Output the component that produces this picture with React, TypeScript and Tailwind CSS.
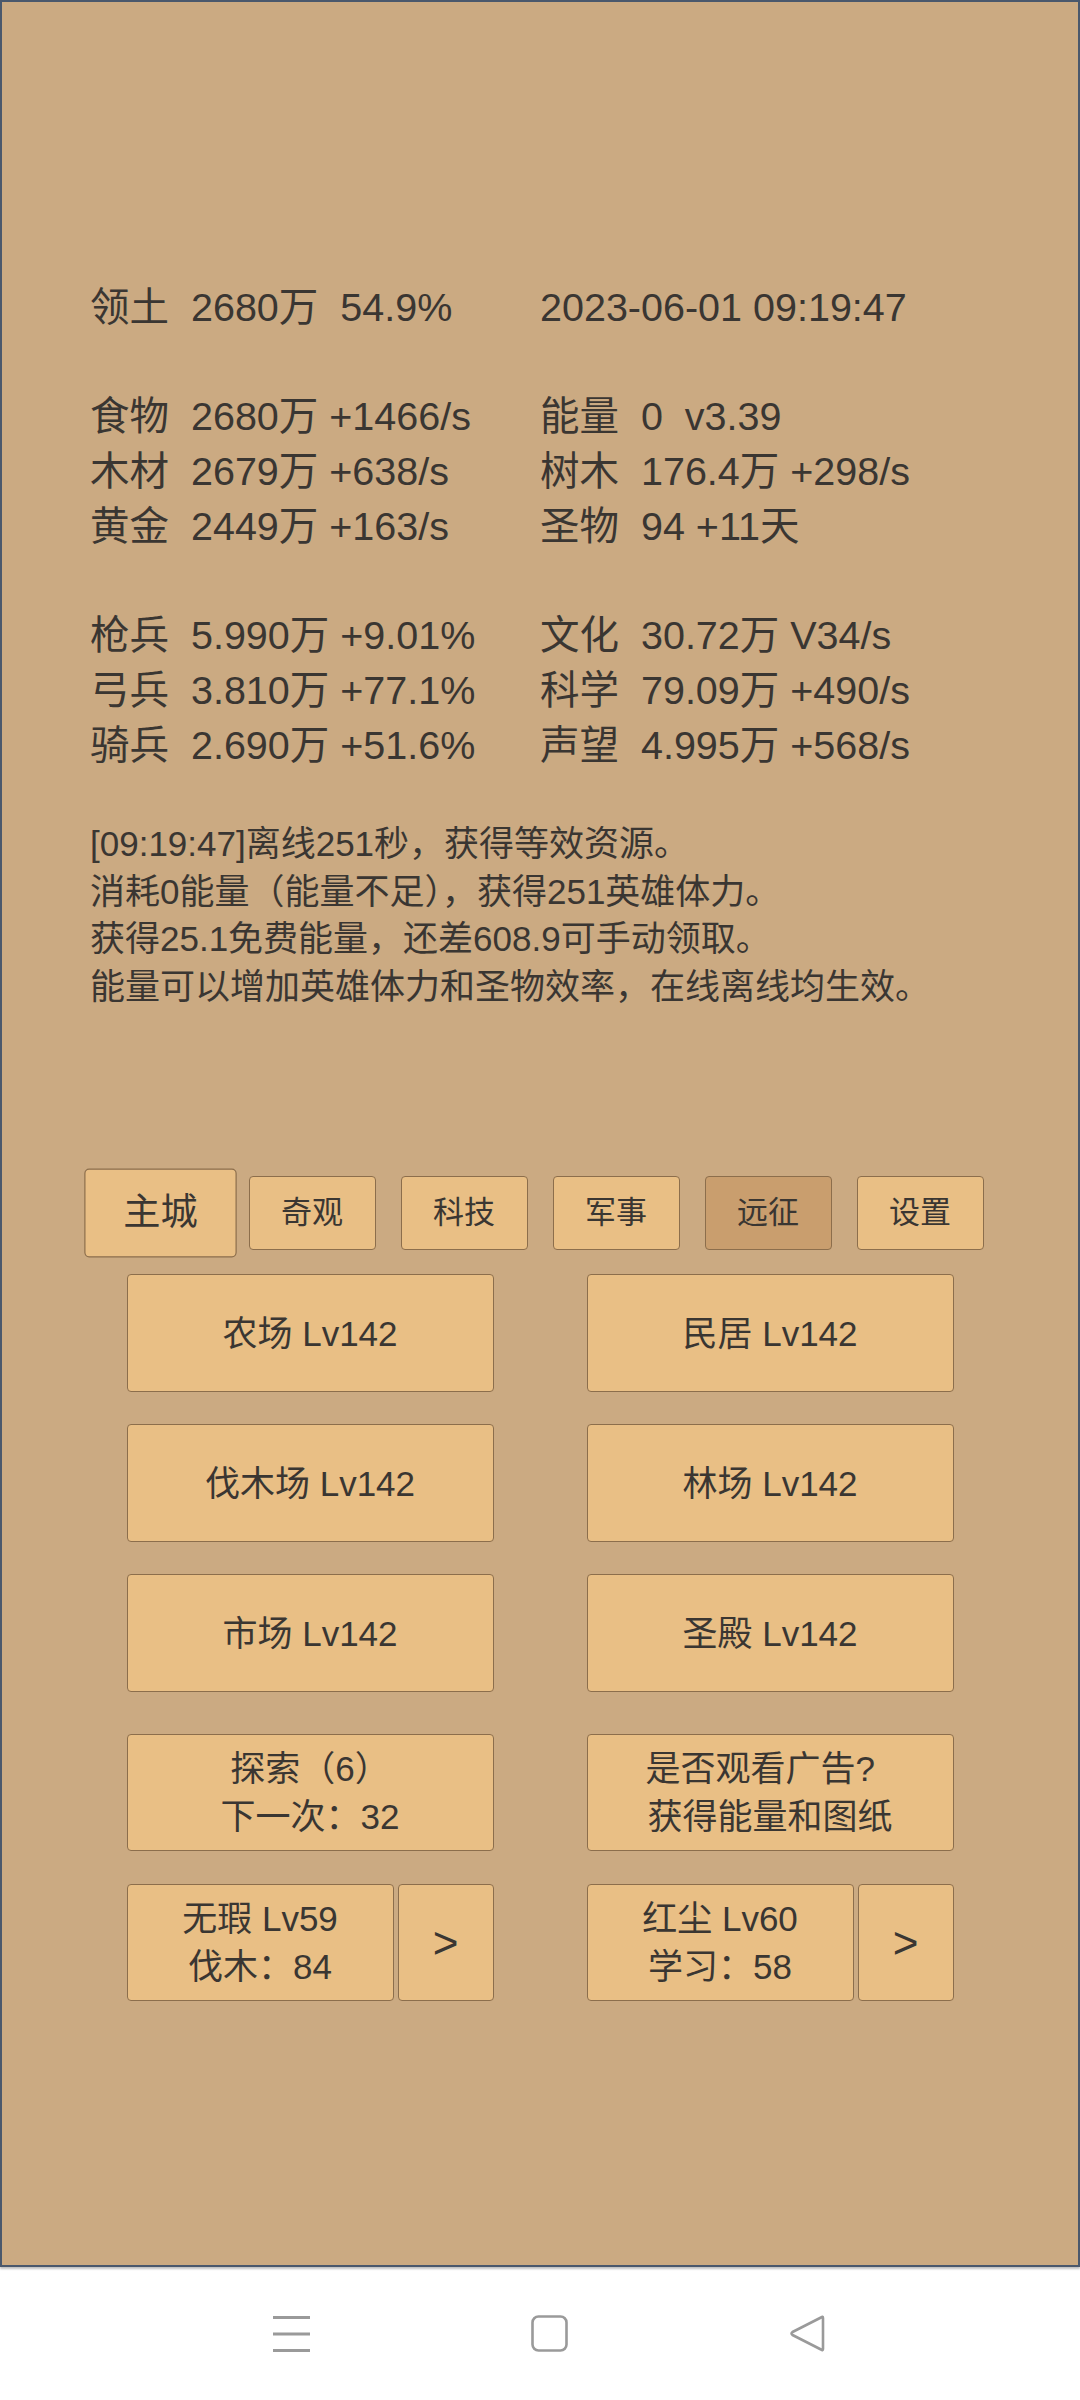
import React from "react";

const statRows: [string, string][][] = [
  [["领土  2680万  54.9%", "2023-06-01 09:19:47"]],
  [
    ["食物  2680万 +1466/s", "能量  0  v3.39"],
    ["木材  2679万 +638/s", "树木  176.4万 +298/s"],
    ["黄金  2449万 +163/s", "圣物  94 +11天"],
  ],
  [
    ["枪兵  5.990万 +9.01%", "文化  30.72万 V34/s"],
    ["弓兵  3.810万 +77.1%", "科学  79.09万 +490/s"],
    ["骑兵  2.690万 +51.6%", "声望  4.995万 +568/s"],
  ],
];

const logs = [
  "[09:19:47]离线251秒，获得等效资源。",
  "消耗0能量（能量不足），获得251英雄体力。",
  "获得25.1免费能量，还差608.9可手动领取。",
  "能量可以增加英雄体力和圣物效率，在线离线均生效。",
];

const tabs = ["主城", "奇观", "科技", "军事", "远征", "设置"];
const buildings = ["农场 Lv142", "民居 Lv142", "伐木场 Lv142", "林场 Lv142", "市场 Lv142", "圣殿 Lv142"];

function Btn({ children, className = "" }: { children: React.ReactNode; className?: string }) {
  return (
    <div
      className={
        "flex flex-col items-center justify-center rounded-[4px] border border-[#8c6e4c] bg-[#e9bf85] text-[#3a3632] " +
        className
      }
    >
      {children}
    </div>
  );
}

export default function App() {
  return (
    <div className="flex h-[2400px] w-[1080px] flex-col bg-white font-['Liberation_Sans','Noto_Sans_CJK_SC',sans-serif] text-[#3a3632]">
      <div className="flex h-[2267px] flex-col border-2 border-[#4a586c] bg-[#cbaa82] shadow-[0_2px_2px_rgba(0,0,0,0.25)]">
        {/* stats */}
        <div className="pt-[278px] pl-[88px] text-[39.5px] leading-[55px] whitespace-pre">
          {statRows.map((block, bi) => (
            <div key={bi} className={bi === 0 ? "" : "mt-[54px]"}>
              {block.map((row, ri) => (
                <div key={ri} className="grid grid-cols-[450px_1fr]">
                  <div>{row[0]}</div>
                  <div>{row[1]}</div>
                </div>
              ))}
            </div>
          ))}
        </div>

        {/* log */}
        <div className="mt-[47px] pl-[88px] text-[35px] leading-[47.5px]">
          {logs.map((l, i) => (
            <div key={i}>{l}</div>
          ))}
        </div>

        {/* tabs */}
        <div className="mt-[166px] flex justify-center gap-[25px]">
          {tabs.map((t, i) => (
            <div
              key={t}
              className={
                "flex h-[74px] w-[127px] items-center justify-center rounded-[4px] border border-[#8c6e4c] text-[31px] " +
                (i === 0 ? "scale-120 bg-[#e9bf85] " : i === 4 ? "bg-[#c99e6e] " : "bg-[#e9bf85] ")
              }
            >
              {t}
            </div>
          ))}
        </div>

        {/* buildings */}
        <div className="mt-[24px] grid grid-cols-2 gap-y-[32px] px-[78px] text-[35px]">
          {buildings.map((b) => (
            <div key={b} className="flex justify-center">
              <Btn className="h-[118px] w-[367px] pt-[3px]">{b}</Btn>
            </div>
          ))}
        </div>

        {/* actions */}
        <div className="mt-[42px] grid grid-cols-2 gap-y-[33px] px-[78px] text-[35px] leading-[48px]">
          <div className="flex justify-center">
            <Btn className="h-[117px] w-[367px]">
              <div>探索（6）</div>
              <div>下一次：32</div>
            </Btn>
          </div>
          <div className="flex justify-center">
            <Btn className="h-[117px] w-[367px] whitespace-pre">
              <div>是否观看广告?  </div>
              <div>获得能量和图纸</div>
            </Btn>
          </div>
          <div className="flex justify-center gap-[4px]">
            <Btn className="h-[117px] w-[267px]">
              <div>无瑕 Lv59</div>
              <div>伐木：84</div>
            </Btn>
            <Btn className="h-[117px] w-[96px] text-[44px]">&gt;</Btn>
          </div>
          <div className="flex justify-center gap-[4px]">
            <Btn className="h-[117px] w-[267px]">
              <div>红尘 Lv60</div>
              <div>学习：58</div>
            </Btn>
            <Btn className="h-[117px] w-[96px] text-[44px]">&gt;</Btn>
          </div>
        </div>
      </div>

      {/* nav bar */}
      <div className="flex flex-1 items-center gap-[221px] pl-[273px]">
        <svg width="37" height="36" viewBox="0 0 37 36">
          <g stroke="#9a9a9a" strokeWidth="3">
            <line x1="0" y1="1.5" x2="37" y2="1.5" />
            <line x1="0" y1="18" x2="37" y2="18" />
            <line x1="0" y1="34.5" x2="37" y2="34.5" />
          </g>
        </svg>
        <svg width="37" height="37" viewBox="0 0 37 37">
          <rect x="1.5" y="1.5" width="34" height="34" rx="6" fill="none" stroke="#9a9a9a" strokeWidth="2.6" />
        </svg>
        <svg width="37" height="37" viewBox="0 0 37 37">
          <path
            d="M34 3 L34 34 Q34 36 32 34.5 L3.5 20 Q1.5 18.5 3.5 17 L32 2.5 Q34 1 34 3 Z"
            fill="none"
            stroke="#9a9a9a"
            strokeWidth="2.6"
            strokeLinejoin="round"
          />
        </svg>
      </div>
    </div>
  );
}
